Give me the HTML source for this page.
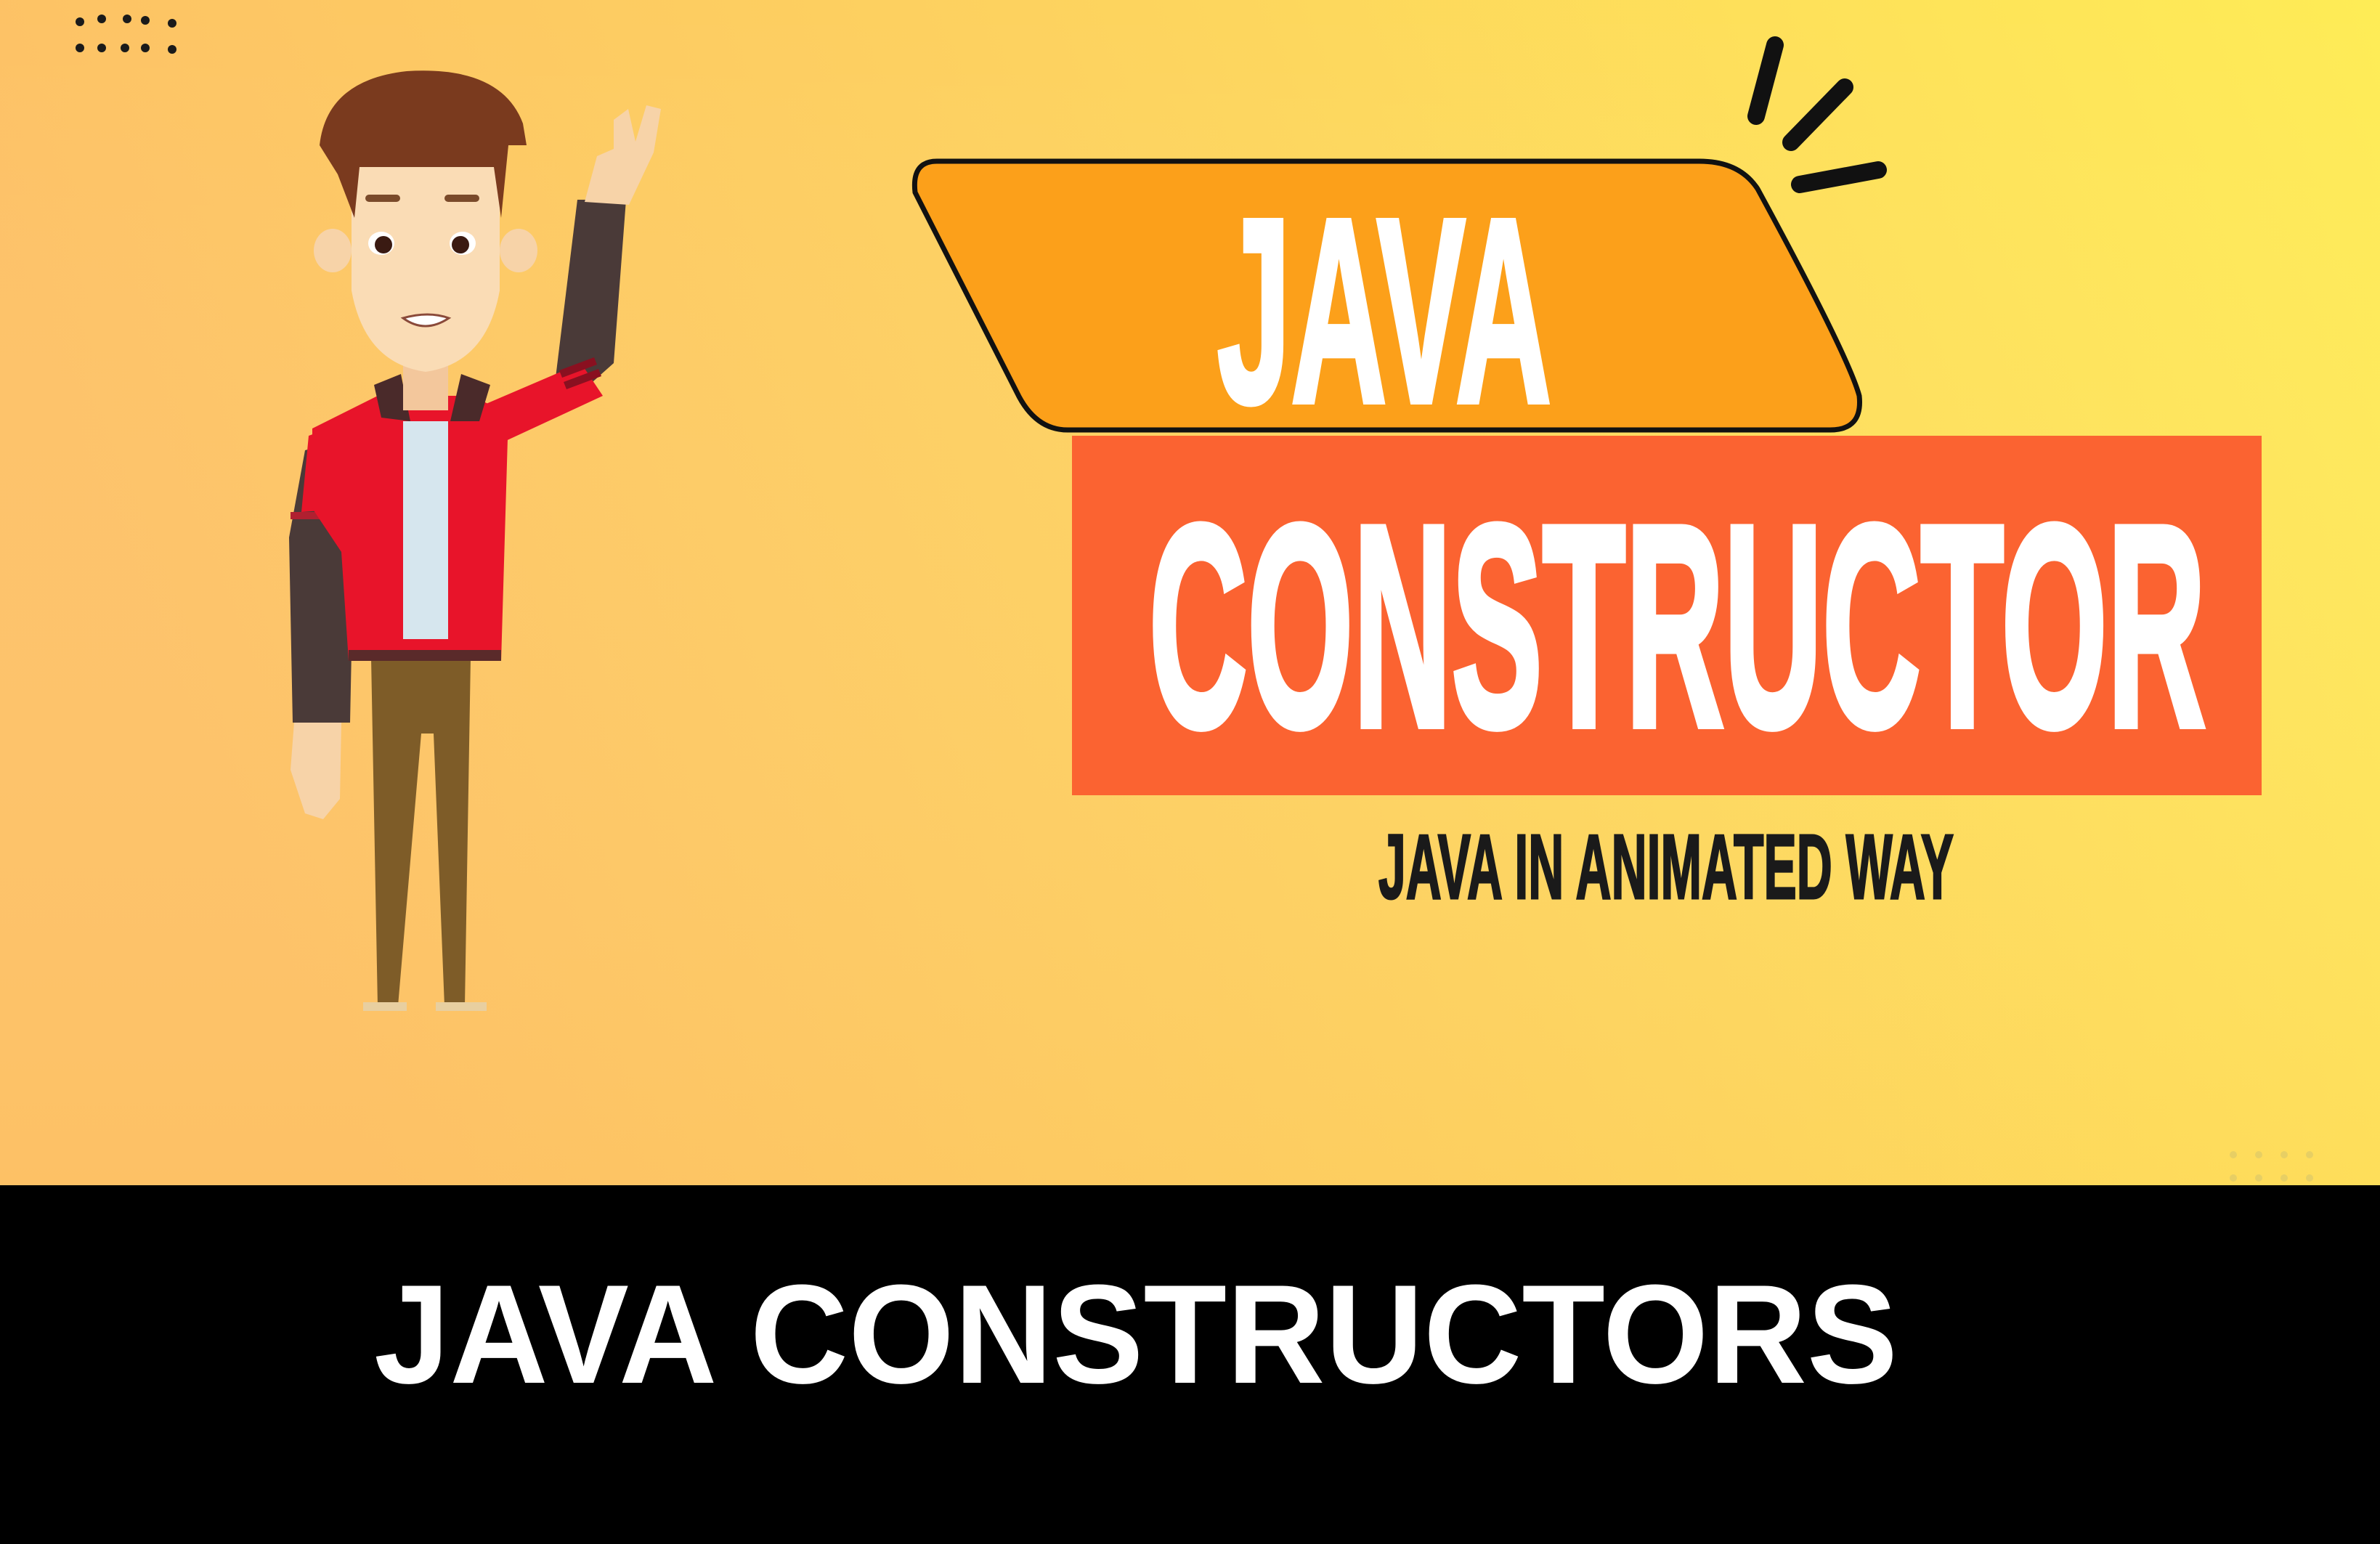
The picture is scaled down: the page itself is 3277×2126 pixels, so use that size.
<!DOCTYPE html>
<html><head><meta charset="utf-8"><style>
html,body{margin:0;padding:0;width:3277px;height:2126px;overflow:hidden;background:#000}
svg{display:block}
</style></head><body>
<svg width="3277" height="2126" viewBox="0 0 3277 2126" xmlns="http://www.w3.org/2000/svg">
<defs>
<linearGradient id="bg" x1="0" y1="0.2" x2="1" y2="0">
<stop offset="0" stop-color="#FDC166"/>
<stop offset="0.45" stop-color="#FDD25F"/>
<stop offset="1" stop-color="#FEEC56"/>
</linearGradient>
<linearGradient id="bg2" x1="0" y1="0" x2="0" y2="1">
<stop offset="0" stop-color="#fff" stop-opacity="0"/>
<stop offset="1" stop-color="#FDC060" stop-opacity="0.15"/>
</linearGradient>
</defs>
<rect x="0" y="0" width="3277" height="1632" fill="url(#bg)"/>
<rect x="0" y="0" width="3277" height="1632" fill="url(#bg2)"/>
<rect x="0" y="1632" width="3277" height="494" fill="#000"/>

<g fill="#1a1a1a">
<circle cx="110" cy="30" r="6"/><circle cx="140" cy="26" r="6"/><circle cx="175" cy="26" r="6"/><circle cx="200" cy="28" r="6"/><circle cx="237" cy="32" r="6"/>
<circle cx="110" cy="66" r="6"/><circle cx="140" cy="66" r="6"/><circle cx="172" cy="66" r="6"/><circle cx="200" cy="66" r="6"/><circle cx="237" cy="68" r="6"/>
</g>
<g fill="#d9c76a" opacity="0.6">
<circle cx="3075" cy="1590" r="5"/><circle cx="3110" cy="1590" r="5"/><circle cx="3145" cy="1590" r="5"/><circle cx="3180" cy="1590" r="5"/>
<circle cx="3075" cy="1622" r="5"/><circle cx="3110" cy="1622" r="5"/><circle cx="3145" cy="1622" r="5"/><circle cx="3180" cy="1622" r="5"/>
</g>

<!-- character -->
<g>
<path d="M511 906 L648 906 L640 1385 L612 1385 L597 1010 L580 1010 L548 1385 L520 1385 Z" fill="#7E5C28"/>
<path d="M500 1380 h60 v12 h-60z M600 1380 h70 v12 h-70z" fill="#e8cfa0"/>
<!-- left arm -->
<path d="M420 620 L490 600 L482 995 L403 995 L398 740 Z" fill="#4A3A38"/>
<path d="M425 600 L480 580 L485 700 L415 705 Z" fill="#E8142A"/>
<rect x="400" y="705" width="82" height="10" fill="#B02030"/>
<path d="M405 995 L470 995 L468 1100 L445 1128 L420 1120 L400 1060 Z" fill="#F7D3A8"/>
<!-- raised arm -->
<path d="M765 520 L795 275 L862 275 L845 500 L800 540 Z" fill="#4A3A38"/>
<path d="M660 560 L800 500 L830 545 L690 610 Z" fill="#E8142A"/>
<path d="M770 510 L818 492 L822 502 L774 520 Z M776 526 L824 508 L828 518 L780 536 Z" fill="#8a1020"/>
<path d="M805 278 L866 282 L900 210 L910 150 L890 145 L875 195 L865 150 L845 165 L845 205 L822 215 Z" fill="#F7D3A8"/>
<!-- torso -->
<path d="M430 590 L520 545 L650 545 L700 570 L690 910 L480 910 L470 760 L430 700 Z" fill="#E8142A"/>
<path d="M515 530 L552 515 L565 580 L525 575 Z M635 515 L675 530 L660 580 L620 580 Z" fill="#4A2A2A"/>
<rect x="555" y="580" width="62" height="300" fill="#D6E6EE"/>
<rect x="480" y="895" width="210" height="15" fill="#5a2a2a"/>
<rect x="555" y="470" width="62" height="95" fill="#F3C79C"/>
<ellipse cx="458" cy="345" rx="26" ry="30" fill="#F7D3A8"/>
<ellipse cx="714" cy="345" rx="26" ry="30" fill="#F7D3A8"/>
<path d="M484 220 L688 220 L688 400 Q670 500 586 512 Q502 500 484 400 Z" fill="#FADCB5"/>
<path d="M440 200 Q450 110 560 98 Q690 90 720 170 L725 200 L700 200 L690 300 L680 230 L495 230 L488 300 L465 240 Z" fill="#7A3A1E"/>
<rect x="503" y="268" width="48" height="10" rx="5" fill="#7A4A2A"/>
<rect x="612" y="268" width="48" height="10" rx="5" fill="#7A4A2A"/>
<ellipse cx="525" cy="335" rx="18" ry="16" fill="#fff"/><circle cx="528" cy="337" r="12" fill="#3a1a12"/>
<ellipse cx="637" cy="335" rx="18" ry="16" fill="#fff"/><circle cx="634" cy="337" r="12" fill="#3a1a12"/>
<path d="M555 438 Q585 460 618 438 Q590 428 555 438 Z" fill="#fff" stroke="#8a4a3a" stroke-width="3"/>
</g>

<!-- badge -->
<path d="M1290 222 L2340 222 Q2395 222 2420 260 Q2545 490 2560 545 Q2565 592 2520 592 L1470 592 Q1425 592 1400 540 L1260 265 Q1255 222 1290 222 Z" fill="#FCA01A" stroke="#111" stroke-width="7"/>
<text x="1676" y="553" font-family="Liberation Sans Narrow, Liberation Sans, sans-serif" font-weight="bold" font-size="362" fill="#fff" stroke="#fff" stroke-width="8" textLength="460" lengthAdjust="spacingAndGlyphs">JAVA</text>

<g stroke="#111" stroke-width="24" stroke-linecap="round" fill="none">
<line x1="2444" y1="62" x2="2418" y2="160"/>
<line x1="2540" y1="120" x2="2466" y2="196"/>
<line x1="2478" y1="254" x2="2586" y2="234"/>
</g>

<rect x="1476" y="600" width="1638" height="495" fill="#FB6331"/>
<text x="1582" y="999" font-family="Liberation Sans Narrow, Liberation Sans, sans-serif" font-weight="bold" font-size="396" fill="#fff" stroke="#fff" stroke-width="10" textLength="1455" lengthAdjust="spacingAndGlyphs">CONSTRUCTOR</text>

<text x="1898" y="1237" font-family="Liberation Sans Narrow, Liberation Sans, sans-serif" font-weight="bold" font-size="126" fill="#1a1a1a" stroke="#1a1a1a" stroke-width="3" textLength="792" lengthAdjust="spacingAndGlyphs">JAVA IN ANIMATED WAY</text>

<text x="515" y="1904" font-family="Liberation Sans, sans-serif" font-weight="bold" font-size="194" fill="#fff" textLength="2098" lengthAdjust="spacingAndGlyphs">JAVA CONSTRUCTORS</text>
</svg>
</body></html>
